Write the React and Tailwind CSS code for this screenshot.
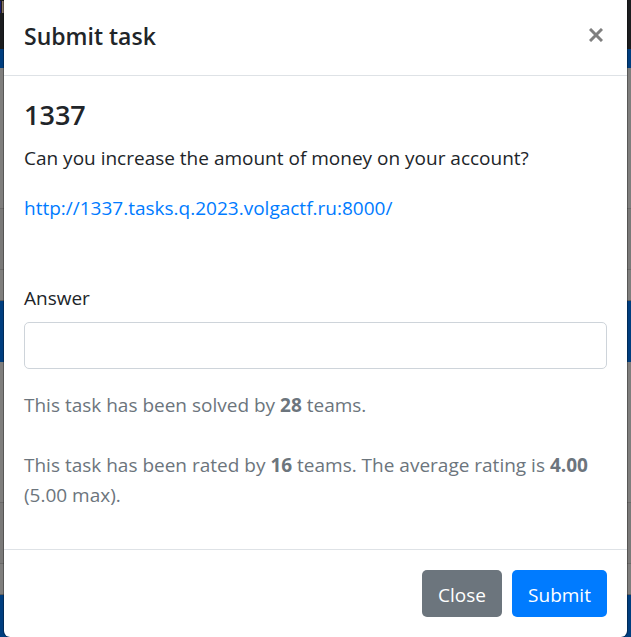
function PageBehind() {
  return (
    <div aria-hidden="true" className="absolute inset-0 flex flex-col overflow-hidden bg-[#7f7e7d]">
      <div className="flex h-[49px] shrink-0 bg-[#1b1d1f]">
        <span className="mt-px h-3 w-px bg-[#1d1d6e]" />
        <span className="mt-px ml-px h-3 w-0.5 bg-[#8a7763]" />
      </div>
      <div className="h-[19px] shrink-0 bg-[#003e7f]" />
      <div className="h-[140px] shrink-0" />
      <div className="h-[62px] shrink-0 border-y border-[#6b6a69] bg-[#7a7978]" />
      <div className="h-[31px] shrink-0 border-b border-[#5f5e5d]" />
      <div className="h-[61px] shrink-0 bg-[#003e7f]" />
      <div className="h-[140px] shrink-0" />
      <div className="h-[62px] shrink-0 border-y border-[#6b6a69] bg-[#7a7978]" />
      <div className="h-[31px] shrink-0 border-b border-[#5f5e5d]" />
      <div className="grow bg-[#003e7f]" />
    </div>
  );
}

export default function App() {
  return (
    <div className="relative min-h-screen font-['Open_Sans','Noto_Sans',sans-serif] text-[19px] leading-[30px] text-[#212529]">
      <PageBehind />
      <div
        role="dialog"
        aria-labelledby="dialog-title"
        className="relative mx-1 rounded-b-md bg-white outline outline-black/30"
      >
        <header className="flex items-center justify-between border-b border-[#dee2e6] px-5 pt-[18px] pb-5">
          <h5 id="dialog-title" className="text-[23px] leading-[37px] font-semibold">
            Submit task
          </h5>
          <button type="button" aria-label="Close dialog" className="mr-[3px] mb-1 p-px text-[#7f7f7f]">
            <svg className="size-[14px]" viewBox="0 0 14 14" stroke="currentColor" strokeWidth="3" aria-hidden="true">
              <path d="M1 1 13 13M13 1 1 13" />
            </svg>
          </button>
        </header>
        <form>
          <div className="px-5 pt-[21px] pb-[39px]">
            <h4 className="mb-[10px] text-[27px] leading-9 font-semibold">1337</h4>
            <p className="mb-5">Can you increase the amount of money on your account?</p>
            <p className="mb-[60px]">
              <a href="http://1337.tasks.q.2023.volgactf.ru:8000/" className="text-[#007bff]">
                http://1337.tasks.q.2023.volgactf.ru:8000/
              </a>
            </p>
            <label htmlFor="answer" className="mb-[9px] block">
              Answer
            </label>
            <input
              id="answer"
              type="text"
              className="mb-[21px] block h-[47px] w-full rounded-[5px] border border-[#ced4da] bg-white px-4"
            />
            <div className="text-[#6c757d]">
              <p className="mb-[30px]">
                This task has been solved by <b>28</b> teams.
              </p>
              <p>
                This task has been rated by <b>16</b> teams. The average rating is <b>4.00</b> (5.00 max).
              </p>
            </div>
          </div>
          <footer className="flex justify-end gap-[10px] border-t border-[#dee2e6] p-5 text-white">
            <button type="button" className="h-[47px] w-20 rounded-[5px] bg-[#6c757d] pt-0.5">
              Close
            </button>
            <button type="submit" className="h-[47px] w-[95px] rounded-[5px] bg-[#007bff] pt-0.5">
              Submit
            </button>
          </footer>
        </form>
      </div>
    </div>
  );
}
